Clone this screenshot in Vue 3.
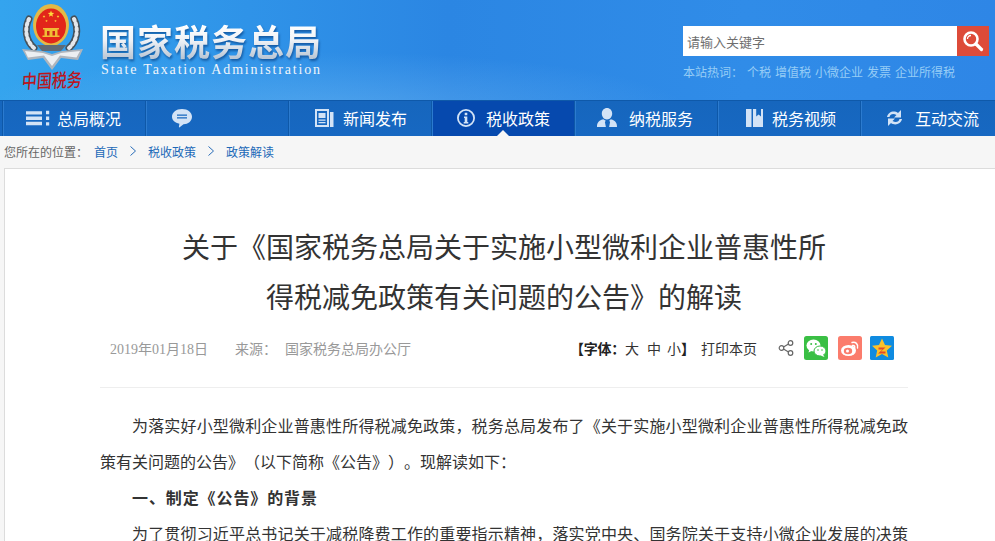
<script setup>
const nav = [
  { label: '总局概况', paths: ['M3 3.200h16v3.400H3zM3 8.500h16v3.400H3zM3 13.800h16v3.400H3zM23 2.800h3.200v3.400H23zM23 8.500h3.200v3.400H23zM23 14.200h3.200v3.400H23z'] },
  { label: '', paths: ['M16 1c5.800 0 10 3.400 10 7.800 0 4.400-4.200 7.600-8.500 7.500l-3.800 3c-.5.300-.9 0-.8-.5l.5-3C9 14.800 6 12.200 6 8.800 6 4.400 10.200 1 16 1zM11 6.500v1.200h10V6.500zM11 9.200v1.200h10V9.200z'] },
  { label: '新闻发布', paths: ['M6 1h14v18H6zM8 3v14h10V3zM9.500 5h7v5h-7zM9.500 11.500h7v1.300h-7zM9.500 14h7v1.300h-7zM21 4h3.500v15H21z'] },
  { label: '税收政策', active: true, paths: ['M14 1a9 9 0 1 1 0 18a9 9 0 0 1 0-18zM14 2.800a7.200 7.200 0 1 0 0 14.400a7.200 7.200 0 0 0 0-14.400zM12.700 4.800h2.600v2.400h-2.600zM12 8.500h3.300v5.500h1v1.500h-4.600V14h1v-4h-.7z'] },
  { label: '纳税服务', paths: ['M12 0c3 0 5.200 2.400 5.200 5.600 0 3.200-2.200 6-5.200 6s-5.200-2.800-5.200-6C6.800 2.400 9 0 12 0zM8.200 11.300l2.600 1.400-.9 1.300 1 5H2c0-4 1.200-6.200 6.200-7.700zM15.800 11.300c5 1.500 6.200 3.700 6.200 7.700h-7.900l1-5-.9-1.300z'] },
  { label: '税务视频', paths: ['M8 1h5.500v18H8zM15 1h3.200v7.500l2.400-2 2.400 2V1h2v18H15z'] },
  { label: '互动交流', paths: ['M6 9C7 4 13 2 17 5l3-3v7.500h-7L15.500 7C12.500 5 9 6 8.500 9zM21 11c-1 5-7 7-11 4l-3 3v-7.500h7L11.500 13c3 2 6.500 1 7-2z'] },
]
const hot = ['个税', '增值税', '小微企业', '发票', '企业所得税']
const crumbs = ['税收政策', '政策解读']
const stars = [
  { x: 51, y: 13, r: 3.400 },
  { x: 44, y: 15.500, r: 1.400 },
  { x: 46.500, y: 20, r: 1.300 },
  { x: 55.500, y: 20, r: 1.300 },
  { x: 58, y: 15.500, r: 1.400 },
]
function starPoints(s) {
  const pts = []
  for (let i = 0; i < 10; i++) {
    const r = i % 2 ? s.r * 0.42 : s.r
    const a = -Math.PI / 2 + (i * Math.PI) / 5
    pts.push(`${(s.x + r * Math.cos(a)).toFixed(2)},${(s.y + r * Math.sin(a)).toFixed(2)}`)
  }
  return pts.join(' ')
}
</script>

<template>
  <div class="page">
    <header class="top">
      <div class="logo">
        <svg class="emblem" width="100" height="69" viewBox="0 0 100 69">
          <g fill="none" stroke-linecap="round">
            <path d="M34 47C26 40 24 28 29 18" stroke="#46515a" stroke-width="7" />
            <path d="M34 47C26 40 24 28 29 18" stroke="#e4e7eb" stroke-width="4" stroke-dasharray="2 3" />
            <path d="M69 47C77 40 79 28 74 18" stroke="#46515a" stroke-width="7" />
            <path d="M69 47C77 40 79 28 74 18" stroke="#e4e7eb" stroke-width="4" stroke-dasharray="2 3" />
          </g>
          <ellipse cx="51" cy="24" rx="18" ry="21" fill="#e4b945" />
          <ellipse cx="51" cy="25" rx="15" ry="17.500" fill="#e2261a" />
          <polygon v-for="(s, i) in stars" :key="i" :points="starPoints(s)" fill="#ffd93b" />
          <path d="M43 27h16v1.600h-1.500v6h2v1.400H42.500v-1.400h2v-6H43z" fill="#f0bd35" />
          <path d="M47 30h2.500v4.500H47zM52.500 30h2.500v4.500h-2.500z" fill="#c9221a" />
          <path d="M22 48L42 50 52 53 62 50 83 48 78 59 61 57 52 69 43 57 28 59z" fill="#aeb5bd" />
          <path d="M25 50L43 52 52 55 61 52 80 50 76.500 56.500 60 54.500 52 65 44 54.500 28 56.500z" fill="#eceff2" />
          <path d="M37 44h29l-5 6H42z" fill="#5f6a75" />
        </svg>
        <div class="seal">中国税务</div>
      </div>
      <div class="brand">
        <div class="brand-cn">国家税务总局</div>
        <div class="brand-en">State Taxation Administration</div>
      </div>
      <div class="tools">
        <div class="search">
          <div class="search-input">请输入关键字</div>
          <div class="search-btn">
            <svg width="22" height="22" viewBox="0 0 22 22">
              <circle cx="9" cy="9" r="6.500" fill="none" stroke="#fff" stroke-width="2.600" />
              <path d="M5.500 9A3.500 3.500 0 0 1 9 5.500" fill="none" stroke="#fff" stroke-width="1.300" />
              <path d="M14 14l5.500 5.500" stroke="#fff" stroke-width="3.200" stroke-linecap="round" />
            </svg>
          </div>
        </div>
        <div class="hot">
          <span class="hot-title">本站热词：</span>
          <span v-for="w in hot" :key="w" class="hot-word">{{ w }}</span>
        </div>
      </div>
    </header>

    <nav class="nav">
      <a v-for="(item, i) in nav" :key="i" class="nav-item" :class="{ active: item.active }">
        <svg class="nav-icon" width="28" height="20" viewBox="0 0 28 20">
          <path v-for="p in item.paths" :key="p" :d="p" fill="#d3e3f6" fill-rule="evenodd" />
        </svg>
        <span v-if="item.label" class="nav-label">{{ item.label }}</span>
      </a>
    </nav>

    <div class="crumb">
      <span class="crumb-here">您所在的位置：</span>
      <a class="crumb-link">首页</a>
      <template v-for="c in crumbs" :key="c">
        <svg class="crumb-arrow" width="6" height="10" viewBox="0 0 6 10">
          <path d="M.5.500L5.500 5 .5 9.500" fill="none" stroke="#2a6db8" stroke-width="1" />
        </svg>
        <a class="crumb-link">{{ c }}</a>
      </template>
    </div>

    <main class="card">
      <div class="article">
        <h1 class="title">关于《国家税务总局关于实施小型微利企业普惠性所得税减免政策有关问题的公告》的解读</h1>
        <div class="meta">
          <div class="meta-left">
            <span class="date">2019年01月18日</span>
            <span class="source">来源：</span>
            <span class="origin">国家税务总局办公厅</span>
          </div>
          <div class="meta-right">
            <span class="font-size"><b>【字体：</b><span>大</span><span>中</span><span>小</span><b>】</b></span>
            <span class="print">打印本页</span>
            <svg class="share" width="16" height="16" viewBox="0 0 16 16">
              <g fill="none" stroke="#666" stroke-width="1.200">
                <circle cx="3.500" cy="8" r="2.300" />
                <circle cx="12.500" cy="3" r="2.300" />
                <circle cx="12.500" cy="13" r="2.300" />
                <path d="M5.500 7L10.500 4M5.500 9L10.500 12" />
              </g>
            </svg>
            <svg class="social wechat" width="24" height="24" viewBox="0 0 24 24">
              <rect width="24" height="24" rx="2.500" fill="#3abf44" />
              <ellipse cx="9.500" cy="9.500" rx="7" ry="6" fill="#fff" />
              <path d="M5.500 13l-1 3.500 4-2z" fill="#fff" />
              <ellipse cx="16" cy="15" rx="6" ry="5" fill="#fff" stroke="#3abf44" stroke-width="1" />
              <path d="M19 18.500l1.500 2.500-4-1.500z" fill="#fff" />
              <circle cx="7.200" cy="8" r="1" fill="#3abf44" />
              <circle cx="11.800" cy="8" r="1" fill="#3abf44" />
              <circle cx="14" cy="14" r=".8" fill="#3abf44" />
              <circle cx="18" cy="14" r=".8" fill="#3abf44" />
            </svg>
            <svg class="social weibo" width="24" height="24" viewBox="0 0 24 24">
              <rect width="24" height="24" rx="2.500" fill="#fb7c6c" />
              <ellipse cx="10.500" cy="14.500" rx="7.500" ry="5.500" fill="#fff" />
              <ellipse cx="10" cy="15" rx="4.200" ry="3.200" fill="#fb7c6c" />
              <circle cx="9.500" cy="15" r="1.500" fill="#fff" />
              <path d="M14 6.500c3.500-1 6.500 1.500 5.500 5.500M14.500 9.500c1.500-.5 2.500.5 2.200 2" fill="none" stroke="#fff" stroke-width="1.400" stroke-linecap="round" />
            </svg>
            <svg class="social" width="24" height="24" viewBox="0 0 24 24">
              <rect width="24" height="24" rx="1.500" fill="#0f8be0" />
              <polygon points="12,2.500 15,9 22,9.800 16.800,14.500 18.300,21.500 12,18 5.700,21.500 7.200,14.500 2,9.800 9,9" fill="#fbc22a" />
              <path d="M8.500 11.500h7l-4.500 4h4.500v2h-7.500l4.500-4h-4z" fill="#e2492c" />
            </svg>
          </div>
        </div>
        <div class="body">
          <p>为落实好小型微利企业普惠性所得税减免政策，税务总局发布了《关于实施小型微利企业普惠性所得税减免政策有关问题的公告》（以下简称《公告》）。现解读如下：</p>
          <p><strong>一、制定《公告》的背景</strong></p>
          <p>为了贯彻习近平总书记关于减税降费工作的重要指示精神，落实党中央、国务院关于支持小微企业发展的决策部署，进一步支持小型微利企业发展。</p>
        </div>
      </div>
    </main>
  </div>
</template>

<style>
html, body { margin: 0; overflow: hidden; }
</style>

<style scoped>
.page {
  width: 995px;
  height: 541px;
  overflow: hidden;
  background: #f6f6f6;
  font-family: "Noto Sans CJK SC", "Liberation Sans", sans-serif;
  color: #333;
  text-spacing-trim: space-all;
}
.top {
  height: 100px;
  display: flex;
  background:
    radial-gradient(ellipse 360px 60px at 330px 112px, rgba(120, 190, 245, .45), rgba(120, 190, 245, 0) 100%),
    linear-gradient(90deg, #34a4ee 0%, #2f93e8 25%, #2b86e3 45%, #308ce8 75%, #2e86e6 100%);
}
.logo { width: 100px; flex: none; display: flex; flex-direction: column; align-items: center; }
.emblem { display: block; margin-top: 1px; }
.seal {
  width: 60px;
  margin-left: 4px;
  font-size: 15px;
  line-height: 20px;
  font-weight: 500;
  color: #bb161d;
  white-space: nowrap;
  transform: rotate(-2deg) skewX(-6deg) scaleY(1.25);
}
.brand { padding-top: 18px; }
.brand-cn {
  font-size: 36px;
  line-height: 44px;
  font-weight: 700;
  letter-spacing: 1px;
  white-space: nowrap;
  color: transparent;
  background: linear-gradient(180deg, #fff 15%, #f0f3f7 50%, #bcc8d6 90%);
  -webkit-background-clip: text;
  background-clip: text;
  filter: drop-shadow(1px 2px 1px rgba(0, 45, 110, .55));
}
.brand-en {
  margin-left: 1px;
  font-family: "Liberation Serif", serif;
  font-size: 14px;
  line-height: 16px;
  letter-spacing: 1.840px;
  color: #f0f5fb;
  white-space: nowrap;
}
.tools { margin-left: auto; margin-right: 6px; padding-top: 26px; width: 306px; }
.search { display: flex; height: 30px; }
.search-input {
  flex: 1;
  background: #fff;
  padding-left: 4px;
  font-size: 13px;
  line-height: 32px;
  color: #6f6f6f;
}
.search-btn {
  width: 32px;
  background: #dd4b39;
  display: flex;
  align-items: center;
  justify-content: center;
}
.hot {
  margin-top: 7px;
  font-size: 12px;
  line-height: 18px;
  color: #96cdf6;
  white-space: nowrap;
  display: flex;
}
.hot-title { width: 64px; }
.hot-word { margin-right: 4px; }
.nav {
  height: 36px;
  display: flex;
  padding-left: 2px;
  box-sizing: border-box;
  border-top: 1px solid #0f59a9;
  background: linear-gradient(180deg, #1666bd, #1768c2);
}
.nav-item {
  width: 143px;
  flex: none;
  display: flex;
  align-items: center;
  padding: 0 0 2px 21px;
  box-sizing: border-box;
  border-left: 1px solid #0e58a8;
  box-shadow: inset 1px 0 0 #2c7bcf;
  position: relative;
  color: #fff;
  font-size: 16px;
}
.nav-item.active { background: #0649ae; }
.nav-item.active::after {
  content: "";
  position: absolute;
  left: 65px;
  bottom: 0;
  border-left: 6px solid transparent;
  border-right: 6px solid transparent;
  border-bottom: 6px solid #f6f6f6;
}
.nav-icon { flex: none; display: block; margin-left: -1px; }
.nav-label { margin-left: 6px; white-space: nowrap; }
.crumb {
  height: 32px;
  display: flex;
  align-items: center;
  padding: 0 0 2px 4px;
  box-sizing: border-box;
  font-size: 12px;
  color: #666;
}
.crumb-here { width: 90px; }
.crumb-link { color: #1c69b8; white-space: nowrap; }
.crumb-arrow { margin: 0 12px; flex: none; }
.card {
  margin-left: 4px;
  width: 1100px;
  height: 400px;
  box-sizing: border-box;
  background: #fff;
  border: 1px solid #dcdcdc;
  padding: 52px 0 0 95px;
}
.article { width: 808px; }
.title {
  width: 660px;
  margin: 0 auto;
  font-size: 28px;
  line-height: 50px;
  font-weight: 400;
  text-align: center;
  color: #333;
}
.meta {
  margin-top: 13px;
  height: 28px;
  padding: 0 14px 25px 10px;
  border-bottom: 1px solid #eee;
  display: flex;
  align-items: center;
  justify-content: space-between;
  font-size: 14px;
}
.meta-left { display: flex; color: #999; white-space: nowrap; }
.date { font-family: "Liberation Serif", "Noto Sans CJK SC", serif; width: 125px; }
.source { width: 50px; }
.meta-right { display: flex; align-items: center; color: #333; white-space: nowrap; }
.font-size { display: flex; width: 131px; }
.font-size b { font-weight: 700; color: #222; }
.font-size b:first-child { letter-spacing: -.25px; }
.font-size span { margin-right: 8px; }
.font-size span:nth-of-type(2) { margin-right: 6px; }
.font-size span:nth-of-type(3) { margin-right: 0; }
.print { width: 85px; }
.share { margin-left: -8px; margin-right: 10px; }
.social { display: block; margin-right: 10px; }
.weibo { margin-right: 8px; }
.social:last-child { margin-right: 0; }
.body { margin-top: 19px; font-size: 16px; line-height: 36px; color: #333; }
.body p { margin: 0; text-indent: 2em; text-align: justify; }
.body strong { font-weight: 700; letter-spacing: .9px; }
</style>
